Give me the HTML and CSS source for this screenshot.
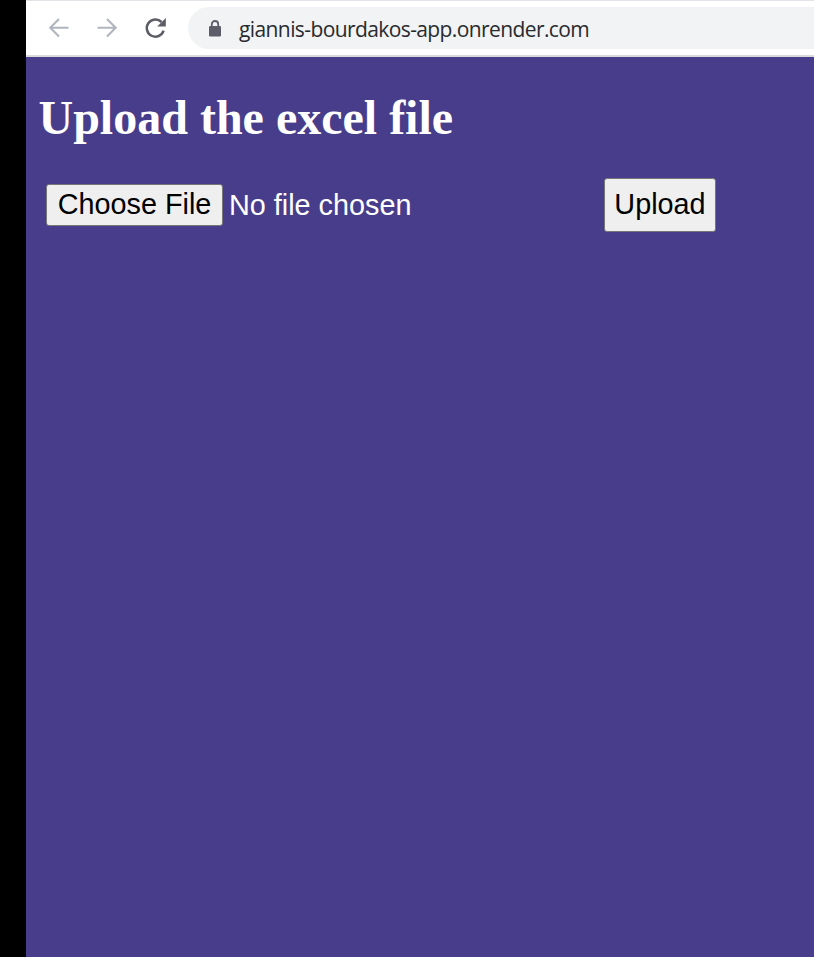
FILE: index.html
```html
<!DOCTYPE html>
<html lang="en">
<head>
<meta charset="utf-8">
<title>Upload</title>
<link rel="stylesheet" href="styles.css">
</head>
<body>
<div class="window">
  <header class="toolbar">
    <svg class="nav back" width="22" height="22" viewBox="0 0 22 22"><path d="M20.5 10.7H2.5M11 2 2.3 10.7l8.7 8.7"/></svg>
    <svg class="nav forward" width="22" height="22" viewBox="0 0 22 22"><path d="M1.5 10.7H19.5M11 2l8.7 8.7-8.7 8.7"/></svg>
    <svg class="reload" width="24" height="22" viewBox="0 0 24 22"><path class="arc" d="M19.6 13.7a8.6 8.6 0 1 1-2.1-8.7"/><path class="head" d="M21.8 1v8.6h-8.6z"/></svg>
    <div class="address">
      <svg class="lock" width="12" height="17" viewBox="0 0 12 17"><path class="shackle" d="M2.8 7V4.2a3.2 3.2 0 0 1 6.4 0V7"/><rect x="0" y="6" width="12" height="10.5" rx="1.3"/></svg>
      <span class="url">giannis-bourdakos-app.onrender.com</span>
    </div>
  </header>
  <main>
    <h1>Upload the excel file</h1>
    <form class="upload">
      <button type="button" class="choose">Choose File</button>
      <span class="status">No file chosen</span>
      <button type="button" class="submit">Upload</button>
    </form>
  </main>
</div>
</body>
</html>
```
FILE: styles.css
```css
* { box-sizing: border-box; }
body {
  margin: 0;
  background: #000;
}
.window {
  margin-left: 26px;
  height: 957px;
  background: #483d8b;
  overflow: hidden;
}
.toolbar {
  display: flex;
  align-items: center;
  height: 57px;
  padding-left: 22px;
  background: #fff;
  border-top: 1px solid #e2e3e8;
  border-bottom: 2px solid #d9dadc;
}
.nav {
  fill: none;
  stroke: #b1b5bd;
  stroke-width: 2.1;
}
.forward { margin-left: 26px; }
.reload { margin-left: 26px; }
.arc { fill: none; stroke: #5c5d65; stroke-width: 2.5; }
.head { fill: #5c5d65; }
.address {
  display: flex;
  align-items: center;
  flex: 1;
  height: 42px;
  margin-left: 20px;
  padding-left: 21px;
  border-radius: 21px 0 0 21px;
  background: #f1f3f4;
}
.lock { fill: #5c5d68; }
.shackle { fill: none; stroke: #5c5d68; stroke-width: 1.8; }
.url {
  margin-left: 18px;
  padding-top: 1px;
  font: 21px/30px "Open Sans", sans-serif;
  letter-spacing: -0.6px;
  color: #292a2e;
  white-space: nowrap;
}
main { padding: 33px 13px 0; }
h1 {
  margin: 0 0 0 -0.5px;
  font: bold 48px/55px "Liberation Serif", serif;
  color: #fff;
}
.upload {
  display: flex;
  align-items: center;
  margin: 33px 0 0 7px;
  font: 28.8px/33px "Liberation Sans", sans-serif;
}
button {
  padding: 0 0 2px;
  font: inherit;
  color: #000;
  background: #efefef;
  border: 1px solid #767676;
  border-radius: 3px;
}
.choose { width: 177px; height: 42px; }
.status {
  width: 375px;
  margin-left: 6px;
  color: #fff;
}
.submit { width: 112px; height: 54px; }
```
